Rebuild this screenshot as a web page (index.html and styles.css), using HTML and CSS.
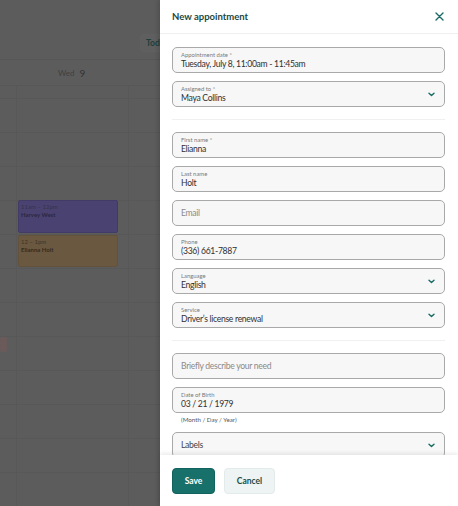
FILE: index.html
```html
<!DOCTYPE html>
<html>
<head>
<meta charset="utf-8">
<link rel="stylesheet" href="styles.css">
</head>
<body>
<div class="page">
  <div class="calendar">
    <div class="cal-top">
      <div class="today-btn">Today</div>
    </div>
    <div class="cal-head"><span class="dow">Wed</span><span class="dnum">9</span></div>
    <div class="cal-grid">
      <div class="event ev-purple"><div class="ev-time">11am – 12pm</div><div class="ev-name">Harvey West</div></div>
      <div class="event ev-orange"><div class="ev-time">12 – 1pm</div><div class="ev-name">Elianna Holt</div></div>
      <div class="event ev-red"></div>
    </div>
  </div>

  <aside class="drawer">
    <header class="drawer-head">
      <h1 class="title">New appointment</h1>
      <svg class="close" width="9" height="9" viewBox="0 0 9 9"><path d="M1 1L8 8M8 1L1 8" stroke="#1b6b65" stroke-width="1.4" stroke-linecap="round"/></svg>
    </header>
    <div class="drawer-body">
      <div class="field"><span class="lbl">Appointment date *</span><span class="val">Tuesday, July 8, 11:00am - 11:45am</span></div>
      <div class="field select"><span class="lbl">Assigned to *</span><span class="val">Maya Collins</span><svg class="chev" width="7" height="5" viewBox="0 0 7 5"><path d="M1 1.2L3.5 3.6L6 1.2" fill="none" stroke="#1b6b65" stroke-width="1.4" stroke-linecap="round" stroke-linejoin="round"/></svg></div>
      <hr class="divider">
      <div class="field"><span class="lbl">First name *</span><span class="val">Elianna</span></div>
      <div class="field"><span class="lbl">Last name</span><span class="val">Holt</span></div>
      <div class="field empty"><span class="ph">Email</span></div>
      <div class="field"><span class="lbl">Phone</span><span class="val">(336) 661-7887</span></div>
      <div class="field select"><span class="lbl">Language</span><span class="val">English</span><svg class="chev" width="7" height="5" viewBox="0 0 7 5"><path d="M1 1.2L3.5 3.6L6 1.2" fill="none" stroke="#1b6b65" stroke-width="1.4" stroke-linecap="round" stroke-linejoin="round"/></svg></div>
      <div class="field select"><span class="lbl">Service</span><span class="val">Driver’s license renewal</span><svg class="chev" width="7" height="5" viewBox="0 0 7 5"><path d="M1 1.2L3.5 3.6L6 1.2" fill="none" stroke="#1b6b65" stroke-width="1.4" stroke-linecap="round" stroke-linejoin="round"/></svg></div>
      <hr class="divider">
      <div class="field empty"><span class="ph">Briefly describe your need</span></div>
      <div class="field-wrap">
        <div class="field"><span class="lbl">Date of Birth</span><span class="val">03 / 21 / 1979</span></div>
        <div class="hint">(Month / Day / Year)</div>
      </div>
      <div class="field select empty"><span class="val labels">Labels</span><svg class="chev" width="7" height="5" viewBox="0 0 7 5"><path d="M1 1.2L3.5 3.6L6 1.2" fill="none" stroke="#1b6b65" stroke-width="1.4" stroke-linecap="round" stroke-linejoin="round"/></svg></div>
    </div>
    <footer class="drawer-foot">
      <button class="btn btn-primary">Save</button>
      <button class="btn btn-secondary">Cancel</button>
    </footer>
  </aside>
</div>
</body>
</html>
```
FILE: styles.css
```css
* { box-sizing: border-box; }
html, body { margin: 0; padding: 0; }
body {
  font-family: "Lato", "Liberation Sans", sans-serif;
  background: #5c5c5c;
  width: 458px;
  height: 506px;
  overflow: hidden;
}
.page {
  position: relative;
  width: 458px;
  height: 506px;
}
.calendar {
  width: 160px;
  height: 506px;
  background: #5c5c5c;
}
.cal-top {
  height: 60px;
  padding-top: 34px;
  padding-left: 140px;
  border-bottom: 1px solid #565656;
}
.today-btn {
  width: 40px;
  height: 18px;
  background: #5f5f5f;
  border: 1px solid #606060;
  border-radius: 3px;
  color: #1d3f3b;
  font-weight: 700;
  font-size: 8.5px;
  line-height: 16px;
  padding-left: 5px;
}
.cal-head {
  height: 26px;
  display: flex;
  align-items: center;
  padding-left: 58px;
  gap: 5px;
  border-bottom: 1px solid #575757;
}
.dow { font-size: 8px; color: #404040; }
.dnum { font-size: 10px; color: #333; }
.cal-grid {
  position: relative;
  height: 420px;
  background:
    linear-gradient(to right, transparent 16px, #585858 16px, #585858 17px, transparent 17px, transparent 128px, #585858 128px, #585858 129px, transparent 129px),
    repeating-linear-gradient(to bottom, transparent 0, transparent 12px, #585858 12px, #585858 13px, transparent 13px, transparent 34px);
}
.event {
  position: absolute;
  left: 18px;
  width: 100px;
  border-radius: 2px;
  padding: 2px 2px;
  font-size: 6px;
  line-height: 8px;
}
.ev-purple { top: 114px; height: 33px; background: #4a4372; border: 1px solid #423b66; }
.ev-orange { top: 149px; height: 32px; background: #6b5840; border: 1px solid #62513b; }
.ev-red { left: 0; width: 7px; top: 251px; height: 15px; background: #6b5a5a; }
.ev-time { color: #36324a; }
.ev-orange .ev-time { color: #3e3527; }
.ev-name { font-weight: 700; color: #2b2740; }
.ev-orange .ev-name { color: #342b1f; }

.drawer {
  position: absolute;
  top: 0;
  left: 160px;
  width: 298px;
  height: 506px;
  background: #fff;
  display: flex;
  flex-direction: column;
  box-shadow: -2px 0 4px rgba(0,0,0,0.15);
}
.drawer-head {
  height: 34px;
  flex: none;
  display: flex;
  align-items: center;
  justify-content: space-between;
  padding: 0 14px 0 12px;
  border-bottom: 1px solid #efefef;
}
.title {
  margin: 0;
  font-size: 9.5px;
  font-weight: 700;
  color: #1c4742;
}
.close { display: block; }
.drawer-body {
  flex: 1;
  overflow: hidden;
  padding: 13px 13px 0 12px;
  display: flex;
  flex-direction: column;
  gap: 8px;
}
.field {
  position: relative;
  height: 26px;
  flex: none;
  border: 1px solid #a9a9a9;
  border-radius: 5px;
  background: #f7f7f7;
  padding: 3px 8px 0;
  display: flex;
  flex-direction: column;
}
.field.empty { justify-content: center; padding-top: 0; }
.lbl {
  font-size: 5.9px;
  line-height: 7px;
  color: #7a7a7a;
}
.val {
  font-size: 8.6px;
  letter-spacing: -0.3px;
  line-height: 12px;
  color: #303030;
}
.val.labels { color: #444; }
.ph {
  font-size: 8.6px;
  letter-spacing: -0.3px;
  color: #8a8a8a;
}
.chev {
  position: absolute;
  right: 9px;
  top: 10px;
}
.divider {
  border: 0;
  border-top: 1px solid #f0f0f0;
  margin: 4px 0 4px;
  flex: none;
}
.field-wrap { flex: none; }
.hint {
  font-size: 6.2px;
  line-height: 8px;
  height: 8px;
  color: #555;
  margin-top: 3px;
  padding-left: 9px;
}
.drawer-foot {
  flex: none;
  height: 51px;
  display: flex;
  align-items: center;
  gap: 9px;
  padding: 0 12px;
  background: #fff;
  box-shadow: 0 -2px 4px rgba(0,0,0,0.08);
  position: relative;
}
.btn {
  height: 26px;
  border-radius: 4px;
  font-family: inherit;
  font-size: 8.5px;
  font-weight: 700;
  border: 0;
  padding: 0;
}
.btn-primary {
  width: 43px;
  background: #17706a;
  color: #fff;
  border: 1px solid #12635d;
}
.btn-secondary {
  width: 51px;
  background: #eef4f3;
  color: #1d4c47;
  border: 1px solid #e3ebea;
}
```
